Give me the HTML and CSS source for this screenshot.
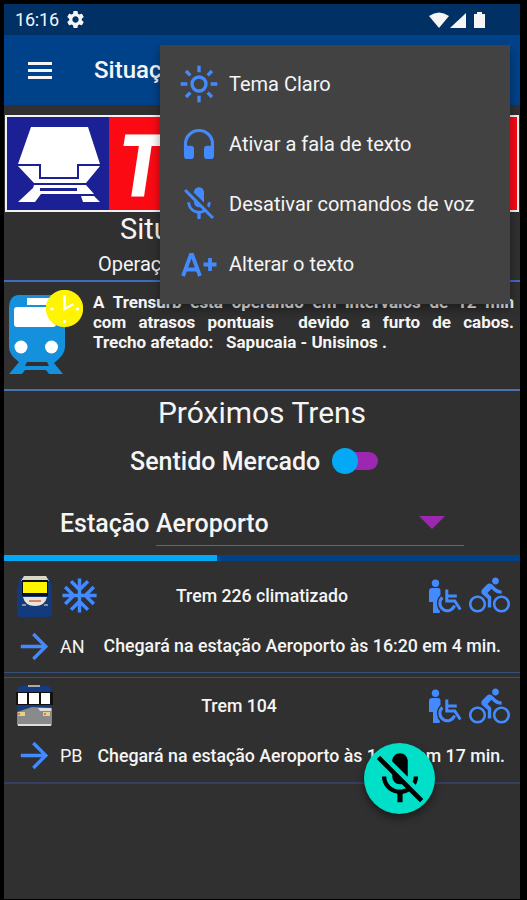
FILE: index.html
```html
<!DOCTYPE html>
<html lang="pt-BR">
<head>
    <meta charset="UTF-8">
    <meta name="viewport" content="width=device-width, initial-scale=1.0">
    <title>Situação</title>
    <link rel="stylesheet" href="styles.css">
</head>
<body>
    <!-- shared icons -->
    <svg class="defs" width="0" height="0">
        <symbol id="mic-off" viewBox="0 0 24 24"><path d="M19 11h-1.7c0 .74-.16 1.43-.43 2.05l1.23 1.23c.56-.98.9-2.09.9-3.28zm-4.02.17c0-.06.02-.11.02-.17V5c0-1.66-1.34-3-3-3S9 3.34 9 5v.18l5.98 5.99zM4.27 3L3 4.27l6.01 6.01V11c0 1.66 1.33 3 2.99 3 .22 0 .44-.03.65-.08l1.66 1.66c-.71.33-1.5.52-2.31.52-2.76 0-5.3-2.1-5.3-5.1H5c0 3.41 2.72 6.23 6 6.72V21h2v-3.28c.91-.13 1.77-.45 2.54-.9L19.73 21 21 19.73 4.27 3z"/></symbol>
        <symbol id="arrow" viewBox="0 0 24 24"><path d="M12 4l-1.41 1.41L16.17 11H4v2h12.17l-5.58 5.59L12 20l8-8z"/></symbol>
        <symbol id="bike" viewBox="0 0 24 24"><path d="M15.5 5.5c1.1 0 2-.9 2-2s-.9-2-2-2-2 .9-2 2 .9 2 2 2zM5 12c-2.8 0-5 2.2-5 5s2.2 5 5 5 5-2.2 5-5-2.2-5-5-5zm0 8.5c-1.9 0-3.5-1.6-3.5-3.5s1.6-3.5 3.5-3.5 3.5 1.6 3.5 3.5-1.6 3.5-3.5 3.5zm5.8-10l2.4-2.4.8.8c1.3 1.3 3 2.1 5.1 2.1V9c-1.5 0-2.7-.6-3.6-1.5l-1.9-1.9c-.5-.4-1-.6-1.6-.6s-1.1.2-1.4.6L7.8 8.4c-.4.4-.6.9-.6 1.4 0 .6.2 1.1.6 1.4L11 14v5h2v-6.2l-2.2-2.3zM19 12c-2.8 0-5 2.2-5 5s2.2 5 5 5 5-2.2 5-5-2.2-5-5-5zm0 8.5c-1.9 0-3.5-1.6-3.5-3.5s1.6-3.5 3.5-3.5 3.5 1.6 3.5 3.5-1.6 3.5-3.5 3.5z"/></symbol>
        <symbol id="access" viewBox="0 0 34 36">
            <circle cx="7.500" cy="5.300" r="3.700"/>
            <path d="M4 10h6q2.500 0 2.500 3v4q-3.500 3-3.500 8 0 5 3 8l-.5 2H5V24H1V13q0-3 3-3z"/>
            <path d="M18.800 11.500v11.500h8l5.500 8.500M18.800 18h10M14.500 19.500a7.500 7.500 0 1 0 12 8" fill="none" stroke="currentColor" stroke-width="3"/>
        </symbol>
    </svg>

    <div class="phone">
        <div class="statusbar">
            <span class="time">16:16</span>
            <svg class="gear" viewBox="0 0 24 24"><path d="M19.140 12.940c.04-.3.06-.61.06-.94 0-.32-.02-.64-.07-.94l2.030-1.580c.18-.14.23-.41.12-.61l-1.920-3.320c-.12-.22-.37-.29-.59-.22l-2.390.96c-.5-.38-1.030-.7-1.620-.94l-.36-2.540c-.04-.24-.24-.41-.48-.41h-3.840c-.24 0-.43.17-.47.41l-.36 2.540c-.59.24-1.130.57-1.620.94l-2.390-.96c-.22-.08-.47 0-.59.22L2.740 8.870c-.12.21-.08.47.12.61l2.030 1.580c-.05.3-.09.63-.09.94s.02.64.07.94l-2.030 1.580c-.18.14-.23.41-.12.61l1.920 3.320c.12.22.37.29.59.22l2.390-.96c.5.38 1.030.7 1.620.94l.36 2.540c.05.24.24.41.48.41h3.840c.24 0 .44-.17.47-.41l.36-2.540c.59-.24 1.130-.56 1.620-.94l2.390.96c.22.08.47 0 .59-.22l1.920-3.320c.12-.22.07-.47-.12-.61l-2.010-1.580zM12 15.600c-1.980 0-3.600-1.620-3.600-3.600s1.620-3.600 3.600-3.600 3.600 1.620 3.600 3.600-1.620 3.600-3.600 3.600z"/></svg>
            <svg class="signal" viewBox="0 0 60 18">
                <path d="M0 5Q10-2 20 5L10 17z"/>
                <path d="M37 2v15H21z"/>
                <path d="M45 3h3V1h5v2h3v14H45z"/>
            </svg>
        </div>

        <div class="appbar">
            <svg class="burger" viewBox="0 0 24 17"><path d="M0 0h24v3H0zM0 7h24v3H0zM0 14h24v3H0z"/></svg>
            <span class="title">Situação</span>
        </div>

        <div class="logo">
            <svg class="train-logo" viewBox="0 0 102 93">
                <path fill="#fff" d="M24 10h57l12 37H70v13H34V47H11z"/>
                <path fill="#fff" d="M11 49h21v13h40V49h21L79 66H27z"/>
                <path fill="#fff" d="M27 68h52l8 9H34l-6 8H11l15-14zM74 79h13l6 6H76z"/>
                <path fill="#1b2194" d="M33 71h37v3H33z"/>
            </svg>
            <svg class="brand" viewBox="0 0 407 93"><text transform="translate(9.500 79) scale(.87 1)">TR</text></svg>
        </div>

        <h2 class="heading">Situação</h2>
        <div class="operation">Operação</div>

        <div class="notice">
            <svg class="notice-icon" viewBox="0 0 78 90">
                <path fill="#1590dd" d="M14 5h32q14 0 14 14v38q0 8-11 16l9 11H44l-3-4H20l-3 4H4l10-12Q4 65 4 57V19Q4 5 14 5z"/>
                <path fill="#303030" d="M22 72h20l2 4H20z"/>
                <path fill="#fff" d="M22 8h24v7H22zM12 17h36q3 0 3 3v14q0 3-3 3H12q-3 0-3-3V20q0-3 3-3z"/>
                <circle cx="16" cy="57" r="6.500" fill="#fff"/>
                <circle cx="46.500" cy="57" r="6.500" fill="#fff"/>
                <circle cx="59.500" cy="18.500" r="18.700" fill="#fff500"/>
                <path d="M59.500 5v14l9-5M45.500 19h3M71 19h3M59.500 30v3" fill="none" stroke="#fff" stroke-width="2.500"/>
            </svg>
            <div class="notice-text">
                <div class="line">A Trensurb está operando em intervalos de 12 min</div>
                <div class="line">com atrasos pontuais&nbsp; devido a furto de cabos.</div>
                <div>Trecho afetado: &nbsp; Sapucaia - Unisinos .</div>
            </div>
        </div>

        <h2 class="next">Próximos Trens</h2>
        <div class="direction">
            <span>Sentido Mercado</span>
            <div class="switch"><div class="knob"></div><div class="track"></div></div>
        </div>
        <div class="station">
            <span class="station-label">Estação</span>
            <div class="select">
                <span>Aeroporto</span>
                <div class="caret"></div>
            </div>
        </div>
        <div class="progress"><div class="bar"></div></div>

        <div class="train">
            <div class="top">
                <svg class="photo" viewBox="0 0 37 42">
                    <path fill="#123a7c" d="M4 3h30l2 12v24q0 3-3 3H4q-3 0-3-3V15z"/>
                    <path fill="#d8d6c4" d="M8 1h22l3 5H5z"/>
                    <path fill="#111" d="M6 5h26v16H6z"/>
                    <path fill="#fff500" d="M7 7h24v11H7z"/>
                    <path fill="#e8e5d8" d="M7 22h24q-2 9-12 9T7 22z"/>
                    <path fill="#d98270" d="M13 25h12v2H13z"/>
                    <path fill="#8d9296" d="M6 29h4v2H6zM28 29h4v2h-4z"/>
                </svg>
                <svg class="snow" viewBox="0 0 24 24"><path d="M22 11h-4.170l3.240-3.240-1.410-1.420L15 11h-2V9l4.660-4.660-1.420-1.410L13 6.170V2h-2v4.170L7.760 2.930 6.340 4.340 11 9v2H9L4.340 6.340 2.930 7.760 6.170 11H2v2h4.170l-3.240 3.240 1.410 1.420L9 13h2v2l-4.660 4.660 1.420 1.410L11 17.830V22h2v-4.170l3.240 3.240 1.420-1.410L13 15v-2h2l4.660 4.660 1.410-1.420L17.830 13H22z"/></svg>
                <span class="name">Trem 226 climatizado</span>
                <svg class="access"><use href="#access"/></svg>
                <svg class="bike"><use href="#bike"/></svg>
            </div>
            <div class="bottom">
                <svg class="arrow"><use href="#arrow"/></svg>
                <span class="code">AN</span>
                <span class="eta">Chegará na estação Aeroporto às 16:20 em 4 min.</span>
            </div>
        </div>

        <div class="train second">
            <div class="top">
                <svg class="photo" viewBox="0 0 37 42">
                    <path fill="#888a8c" d="M1 20h35v19q0 2-2 2H3q-2 0-2-2z"/>
                    <path fill="#163b80" d="M5 1h27q4 2 4 6v16L16 22 1 27V7q0-4 4-6z"/>
                    <path fill="#aaa" d="M12 0h12v2H12z"/>
                    <path fill="#111" d="M0 7h37v13H0z"/>
                    <path fill="#fff" d="M2 8h9v11H2zM13 8h10v11H13zM25 8h9v11h-9z"/>
                    <path fill="#ddd" d="M22 23h13v3H24zM2 39h33v2H2z"/>
                    <path fill="#e5d27a" d="M2 27h7v4H2zM27 27h7v4h-7z"/>
                    <path fill="#e0706a" d="M2 28h2v2H2zM28 28h2v2h-2z"/>
                </svg>
                <span class="name">Trem 104</span>
                <svg class="access"><use href="#access"/></svg>
                <svg class="bike"><use href="#bike"/></svg>
            </div>
            <div class="bottom">
                <svg class="arrow"><use href="#arrow"/></svg>
                <span class="code">PB</span>
                <span class="eta">Chegará na estação Aeroporto às 16:33 em 17 min.</span>
            </div>
        </div>

        <div class="menu">
            <div class="item">
                <svg class="outline" viewBox="0 0 24 24">
                    <circle cx="12" cy="12" r="4.200"/>
                    <path d="M12 1v4M12 19v4M1 12h4M19 12h4M4.200 4.200l2.600 2.600M17.200 17.200l2.600 2.600M4.200 19.800l2.600-2.600M17.200 6.800l2.600-2.600"/>
                </svg>
                <span>Tema Claro</span>
            </div>
            <div class="item">
                <svg viewBox="0 0 24 24">
                    <path d="M3.900 17v-5a8.100 8.100 0 0 1 16.200 0v5" fill="none" stroke="currentColor" stroke-width="1.900"/>
                    <rect x="3" y="13" width="6" height="8" rx="2"/>
                    <rect x="15" y="13" width="6" height="8" rx="2"/>
                </svg>
                <span>Ativar a fala de texto</span>
            </div>
            <div class="item">
                <svg><use href="#mic-off"/></svg>
                <span>Desativar comandos de voz</span>
            </div>
            <div class="item">
                <svg class="outline text-size" viewBox="0 0 40 40">
                    <path d="M4 32L11.700 11h1.600L21 32M7 25.500h11M24.500 20.500h13M31 14v13"/>
                </svg>
                <span>Alterar o texto</span>
            </div>
        </div>

        <div class="fab"><svg><use href="#mic-off"/></svg></div>
    </div>
</body>
</html>
```

FILE: styles.css
```css
body {
    margin: 0;
    background-color: #000;
    font-family: Roboto, sans-serif;
    color: #f5f5f5;
}
svg {
    display: block;
    flex: none;
    fill: currentColor;
}
.defs {
    position: absolute;
}
.phone {
    position: relative;
    width: 516px;
    height: 895px;
    margin: 4px 0 0 4px;
    background-color: #303030;
    overflow: hidden;
    white-space: nowrap;
}

/* top bars */
.statusbar {
    display: flex;
    align-items: center;
    height: 31px;
    padding: 0 34px 0 11px;
    background-color: #003064;
}
.time {
    width: 50px;
    font-size: 18px;
    letter-spacing: -0.2px;
}
.gear {
    width: 21px;
    height: 21px;
}
.signal {
    width: 60px;
    height: 18px;
    margin-left: auto;
    margin-right: -3px;
}
.appbar {
    display: flex;
    align-items: center;
    height: 70px;
    padding-left: 24px;
    background-color: #00428a;
}
.burger {
    width: 24px;
    height: 17px;
}
.title {
    margin-left: 42px;
    font-size: 24px;
    font-weight: 500;
}

.logo {
    display: flex;
    height: 93px;
    margin: 10px 1px 0;
    border: 2px solid #f3f1f4;
    background-color: #fc0a14;
}
.train-logo {
    width: 102px;
    height: 93px;
    background-color: #1b2194;
}
.brand {
    width: 407px;
    height: 93px;
}
.brand text {
    fill: #fff;
    font-size: 87px;
    font-weight: 900;
    font-style: italic;
}

.heading {
    margin: 0;
    height: 34px;
    padding-left: 116px;
    font-size: 29px;
    line-height: 34px;
    font-weight: 400;
}
.operation {
    height: 34px;
    padding-left: 94px;
    font-size: 20px;
    line-height: 36px;
    border-bottom: 2px solid #3d6cc0;
}
.notice {
    display: flex;
    height: 107px;
    padding-right: 6px;
    border-bottom: 2px solid #4774ad;
}
.notice-icon {
    width: 78px;
    height: 90px;
    margin: 8px 0 0 1px;
}
.notice-text {
    flex: 1;
    margin: 10px 0 0 10px;
    font-size: 17px;
    line-height: 20px;
    font-weight: 700;
}
.line {
    text-align-last: justify;
    white-space: normal;
}

/* filters */
.next {
    margin: 0;
    height: 44px;
    text-align: center;
    font-size: 30px;
    line-height: 44px;
    font-weight: 400;
}
.direction {
    display: flex;
    align-items: center;
    height: 52px;
    padding-left: 126px;
    font-size: 25px;
    font-weight: 500;
}
.switch {
    margin-left: 12px;
    display: flex;
    align-items: center;
}
.knob {
    z-index: 1;
    width: 26px;
    height: 26px;
    border-radius: 50%;
    background-color: #03a9f4;
}
.track {
    width: 33px;
    height: 18px;
    margin-left: -13px;
    border-radius: 9px;
    background-color: #9c27b0;
}
.station {
    display: flex;
    height: 67px;
    padding-left: 56px;
    font-size: 25px;
    font-weight: 500;
}
.station-label {
    width: 96px;
    line-height: 74px;
}
.select {
    display: flex;
    justify-content: space-between;
    width: 308px;
    height: 58px;
    line-height: 74px;
    border-bottom: 1px solid #666;
}
.caret {
    align-self: flex-end;
    margin: 0 19px 16px 0;
    border: 13px solid transparent;
    border-top-color: #9c27b0;
    border-bottom: 0;
}
.progress {
    height: 6px;
    margin-top: 1px;
    background-color: #00428a;
}
.bar {
    width: 213px;
    height: 6px;
    background-color: #03a9f4;
}

/* train cards */
.train {
    height: 111px;
    border-bottom: 1px solid #36507c;
}
.second {
    height: 104px;
    margin-top: 4px;
    border-top: 1px solid #36507c;
    border-bottom: 2px solid #343f62;
}
.top {
    display: grid;
    grid-template-columns: 38px 41px 1fr 34px 41px;
    align-items: center;
    height: 69px;
    padding: 0 10px 0 12px;
}
.second .top {
    grid-template-columns: 38px 0 1fr 34px 41px;
    height: 56px;
}
.photo {
    width: 37px;
    height: 42px;
}
.snow {
    width: 41px;
    height: 41px;
    margin-left: 5px;
}
.name {
    grid-column: 3;
    justify-self: center;
    margin-right: 6px;
    font-size: 17.7px;
    font-weight: 500;
}
.second .name {
    margin-right: 11px;
}
.access {
    grid-column: 4;
    width: 34px;
    height: 36px;
    margin-left: -7px;
}
.bike {
    grid-column: 5;
    width: 41px;
    height: 41px;
}
.snow, .access, .bike, .arrow {
    color: #448aff;
}
.bottom {
    display: flex;
    align-items: center;
    height: 32px;
    padding: 0 19px 0 10px;
}
.second .bottom {
    height: 43px;
    padding-right: 15px;
}
.arrow {
    width: 41px;
    height: 41px;
}
.code {
    margin-left: 5px;
    font-size: 18px;
}
.eta {
    margin-left: auto;
    font-size: 17.75px;
    font-weight: 500;
}

/* overlays */
.menu {
    position: absolute;
    left: 156px;
    top: 41px;
    width: 350px;
    height: 250px;
    padding-top: 9px;
    background-color: #424242;
    box-shadow: 0 5px 10px rgba(0, 0, 0, 0.4);
}
.item {
    display: flex;
    align-items: center;
    height: 60px;
    padding-left: 19px;
    font-size: 20px;
}
.item svg {
    width: 40px;
    height: 40px;
    margin-right: 10px;
    color: #448aff;
}
.item .outline {
    fill: none;
    stroke: currentColor;
    stroke-width: 2;
}
.item .text-size {
    stroke-width: 3.8;
}
.fab {
    position: absolute;
    left: 360px;
    top: 739px;
    display: flex;
    align-items: center;
    justify-content: center;
    width: 71px;
    height: 71px;
    border-radius: 50%;
    background-color: #00e0c8;
    color: #000;
    box-shadow: 0 4px 9px rgba(0, 0, 0, 0.45);
}
.fab svg {
    width: 62px;
    height: 62px;
}
```
